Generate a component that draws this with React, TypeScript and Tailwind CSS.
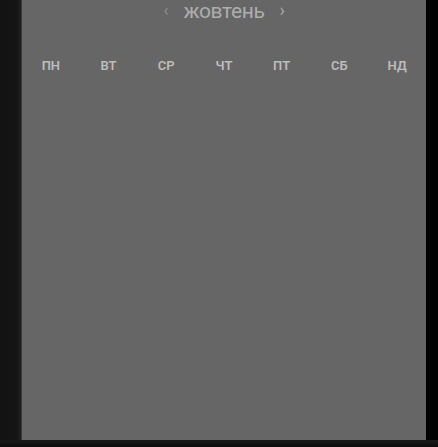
export default function App() {
  const days = ['пн', 'вт', 'ср', 'чт', 'пт', 'сб', 'нд'];

  return (
    <div className="flex h-[447px] w-[438px] flex-col overflow-hidden bg-black font-['Roboto',sans-serif]">
      <div className="flex h-[440px]">
        {/* left strip */}
        <div className="w-[22px] bg-gradient-to-r from-[#131313] from-70% to-[#1e1e1e] border-r border-[#3a3a3a]" />

        {/* calendar panel */}
        <div className="flex w-[404px] flex-col bg-[#666666]">
          <div className="flex h-[24px] items-start justify-center gap-[15px]">
            <button className="text-[18px] leading-[20px] text-[#8a8a8a]">‹</button>
            <span className="text-[21px] leading-[22px] tracking-[-0.4px] text-[#adadad]">жовтень</span>
            <button className="text-[18px] leading-[20px] text-[#a8a8a8]">›</button>
          </div>

          <div className="mt-[35px] grid grid-cols-7">
            {days.map((d) => (
              <div
                key={d}
                className="text-center text-[13px] font-semibold uppercase leading-[14px] text-[#bdbdbd]"
              >
                {d}
              </div>
            ))}
          </div>
        </div>

        {/* right strip */}
        <div className="flex-1 bg-black" />
      </div>

      {/* bottom strip */}
      <div className="flex-1 bg-gradient-to-b from-[#1a1a1a] to-[#0c0c0c]" />
    </div>
  );
}
